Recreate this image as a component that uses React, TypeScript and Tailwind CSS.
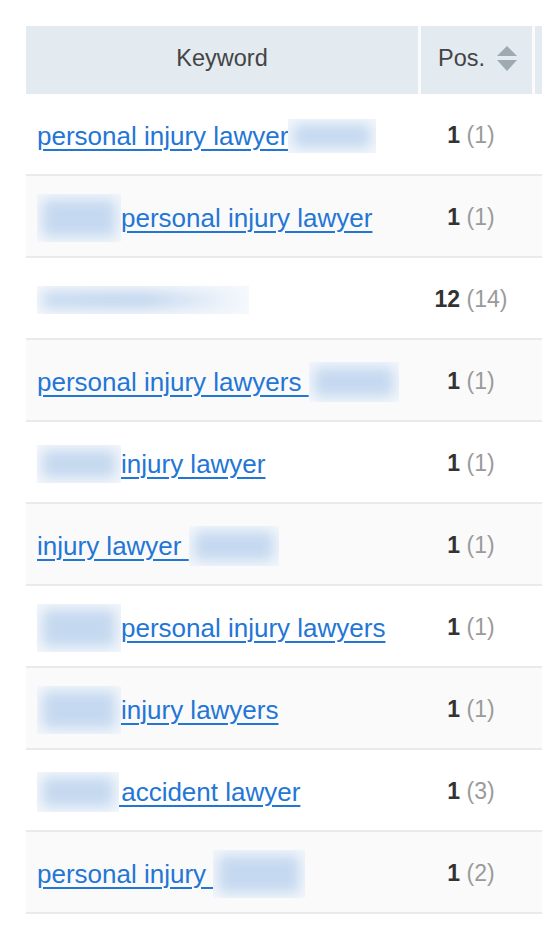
import React from 'react';

type Part = { text?: string; blur?: { w: number; h: number; fade?: boolean } };

interface Row {
    id: number;
    parts: Part[];
    pos: number;
    prev: number;
}

const rows: Row[] = [
    { id: 1, parts: [{ text: 'personal injury lawyer' }, { blur: { w: 88, h: 34 } }], pos: 1, prev: 1 },
    { id: 2, parts: [{ blur: { w: 84, h: 48 } }, { text: 'personal injury lawyer' }], pos: 1, prev: 1 },
    { id: 3, parts: [{ blur: { w: 212, h: 28, fade: true } }], pos: 12, prev: 14 },
    { id: 4, parts: [{ text: 'personal injury lawyers\u00a0' }, { blur: { w: 90, h: 40 } }], pos: 1, prev: 1 },
    { id: 5, parts: [{ blur: { w: 84, h: 38 } }, { text: 'injury lawyer' }], pos: 1, prev: 1 },
    { id: 6, parts: [{ text: 'injury lawyer\u00a0' }, { blur: { w: 90, h: 40 } }], pos: 1, prev: 1 },
    { id: 7, parts: [{ blur: { w: 84, h: 48 } }, { text: 'personal injury lawyers' }], pos: 1, prev: 1 },
    { id: 8, parts: [{ blur: { w: 84, h: 48 } }, { text: 'injury lawyers' }], pos: 1, prev: 1 },
    { id: 9, parts: [{ blur: { w: 82, h: 40 } }, { text: '\u200aaccident lawyer' }], pos: 1, prev: 3 },
    { id: 10, parts: [{ text: 'personal injury\u00a0' }, { blur: { w: 92, h: 48 } }], pos: 1, prev: 2 },
];

function Blur({ w, h, fade }: { w: number; h: number; fade?: boolean }) {
    return (
        <span
            className="relative inline-block shrink-0 bg-[#f5f8fc] overflow-hidden"
            style={{ width: w, height: h }}
        >
            <span
                className={`absolute inset-[5px] blur-[7px] ${
                    fade ? 'bg-gradient-to-r from-[#c6d9f0] via-[#c0d5ee] to-transparent' : 'bg-[#c4d8ef]'
                }`}
            />
        </span>
    );
}

function SortIcon() {
    return (
        <svg width="20" height="26" viewBox="0 0 20 26" className="ml-[12px]">
            <path d="M10 0 L20 10 L0 10 Z" fill="#9ea9b1" />
            <path d="M0 14 L20 14 L10 25 Z" fill="#9ea9b1" />
        </svg>
    );
}

export default function App() {
    return (
        <div className="min-h-[936px] bg-white pt-[26px] pl-[26px] font-['Liberation_Sans',Arial,sans-serif]">
            <div className="w-[516px]">
                {/* Header */}
                <div className="flex h-[68px] bg-[#e3eaf0] text-[#444] text-[23.5px]">
                    <div className="w-[392px] flex items-center justify-center pb-[3px]">Keyword</div>
                    <div className="w-[3px] bg-white/80" />
                    <div className="w-[111px] flex items-center justify-center pl-[2px] pb-[3px]">
                        <span>Pos.</span>
                        <SortIcon />
                    </div>
                    <div className="w-[3px] bg-white/80" />
                    <div className="flex-1" />
                </div>

                {/* Rows */}
                {rows.map((row, i) => (
                    <div
                        key={row.id}
                        className={`flex h-[82px] border-b-2 border-[#e8ebee] ${
                            i % 2 === 1 ? 'bg-[#fafafa]' : 'bg-white'
                        }`}
                    >
                        <div className="w-[392px] flex items-center pl-[11px] pt-[3px]">
                            {row.parts.map((p, k) =>
                                p.blur ? (
                                    <Blur key={k} {...p.blur} />
                                ) : (
                                    <a
                                        key={k}
                                        href="#"
                                        className="text-[26px] leading-none text-[#2376d6] underline decoration-2 underline-offset-[4px] whitespace-pre"
                                    >
                                        {p.text}
                                    </a>
                                )
                            )}
                        </div>
                        <div className="w-[114px] flex items-center justify-center text-[23px] pr-[8px] pt-[2px]">
                            <span className="font-bold text-[#333]">{row.pos}</span>
                            <span className="text-[#9a9a9a]">&nbsp;({row.prev})</span>
                        </div>
                    </div>
                ))}
            </div>
        </div>
    );
}
